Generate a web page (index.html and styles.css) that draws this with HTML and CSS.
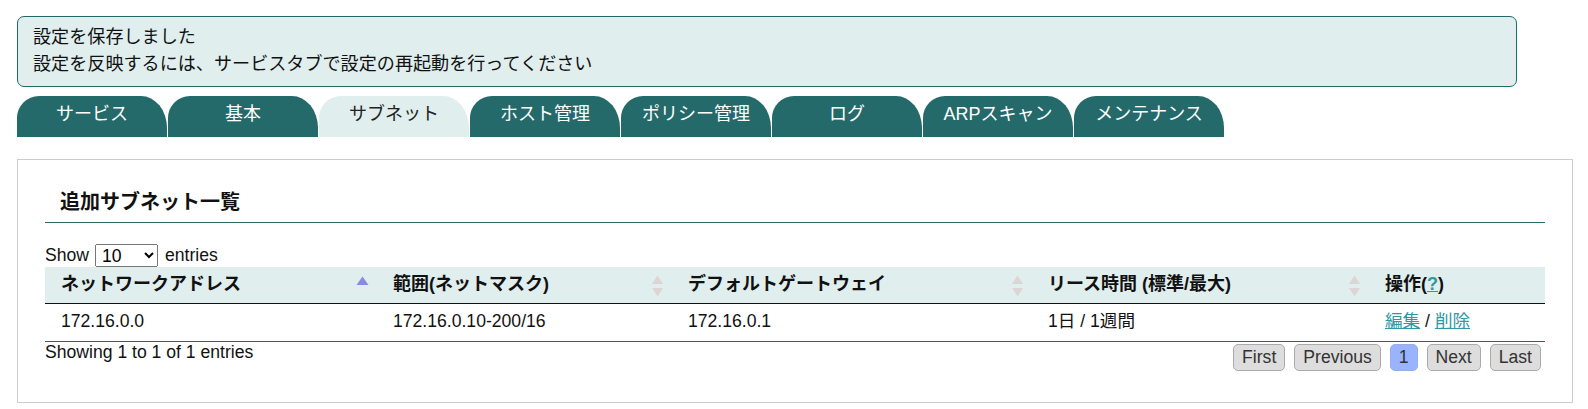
FILE: index.html
```html
<!DOCTYPE html>
<html lang="ja">
<head>
<meta charset="utf-8">
<title>サブネット</title>
<link rel="stylesheet" href="styles.css">
</head>
<body>
<div class="msg">
  <div>設定を保存しました</div>
  <div>設定を反映するには、サービスタブで設定の再起動を行ってください</div>
</div>
<nav class="tabs">
  <a class="tab">サービス</a>
  <a class="tab">基本</a>
  <a class="tab active">サブネット</a>
  <a class="tab">ホスト管理</a>
  <a class="tab">ポリシー管理</a>
  <a class="tab">ログ</a>
  <a class="tab">ARPスキャン</a>
  <a class="tab">メンテナンス</a>
</nav>
<section class="panel">
  <h3 class="title">追加サブネット一覧</h3>
  <div class="length">
    <span>Show</span>
    <select class="len-select"><option>10</option><option>25</option><option>50</option><option>100</option></select>
    <span>entries</span>
  </div>
  <table class="grid">
    <colgroup>
      <col class="c1"><col class="c2"><col class="c3"><col class="c4"><col class="c5">
    </colgroup>
    <thead>
      <tr>
        <th><div class="th-in"><span>ネットワークアドレス</span>
          <svg class="sort" width="13" height="22" viewBox="0 0 13 22"><path class="asc" d="M6.5 1.5L12.5 10H0.5Z"/></svg></div></th>
        <th><div class="th-in"><span>範囲(ネットマスク)</span>
          <svg class="sort" width="13" height="22" viewBox="0 0 13 22"><path class="off" d="M6.5 0.5L12 9H1Z"/><path class="off" d="M1 13H12L6.5 21.5Z"/></svg></div></th>
        <th><div class="th-in"><span>デフォルトゲートウェイ</span>
          <svg class="sort" width="13" height="22" viewBox="0 0 13 22"><path class="off" d="M6.5 0.5L12 9H1Z"/><path class="off" d="M1 13H12L6.5 21.5Z"/></svg></div></th>
        <th><div class="th-in"><span>リース時間 (標準/最大)</span>
          <svg class="sort" width="13" height="22" viewBox="0 0 13 22"><path class="off" d="M6.5 0.5L12 9H1Z"/><path class="off" d="M1 13H12L6.5 21.5Z"/></svg></div></th>
        <th><div class="th-in"><span>操作(<a class="link" href="#">?</a>)</span></div></th>
      </tr>
    </thead>
    <tbody>
      <tr>
        <td>172.16.0.0</td>
        <td>172.16.0.10-200/16</td>
        <td>172.16.0.1</td>
        <td>1日 / 1週間</td>
        <td><a class="link" href="#">編集</a> / <a class="link" href="#">削除</a></td>
      </tr>
    </tbody>
  </table>
  <div class="foot">
    <div class="info">Showing 1 to 1 of 1 entries</div>
    <div class="pager">
      <a class="pbtn">First</a>
      <a class="pbtn">Previous</a>
      <a class="pbtn current">1</a>
      <a class="pbtn">Next</a>
      <a class="pbtn">Last</a>
    </div>
  </div>
</section>
</body>
</html>
```

FILE: styles.css
```css
html, body {
  background: #fff;
}
body {
  margin: 0;
  padding: 16px 15px 0 17px;
  font-family: "Liberation Sans", "Noto Sans CJK JP", sans-serif;
  font-size: 17.6px;
  color: #111;
}
.msg {
  width: 1500px;
  box-sizing: border-box;
  border: 1px solid #236a6a;
  border-radius: 7px;
  background: #e0eeee;
  padding: 7px 15px 8px;
  line-height: 27px;
  font-size: 18.1px;
}
.tabs {
  display: flex;
  gap: 1px;
  margin-top: 9px;
}
.tab {
  width: 150px;
  height: 41px;
  box-sizing: border-box;
  padding-top: 5px;
  line-height: 27px;
  text-align: center;
  font-size: 18px;
  color: #fff;
  background: #256a6a;
  border-radius: 22px 26px 0 0 / 22px 32px 0 0;
}
.tab.active {
  background: #e0eeee;
  color: #222;
}
.panel {
  margin-top: 22px;
  border: 1px solid #cccccc;
  padding: 27px 27px 31px;
}
.title {
  margin: 0;
  padding: 0 15px 5px;
  line-height: 30px;
  font-size: 20px;
  font-weight: bold;
  border-bottom: 1px solid #2b6a6a;
}
.length {
  margin-top: 21px;
  height: 23px;
  display: flex;
  align-items: center;
  gap: 6px;
  line-height: 23px;
}
.len-select {
  width: 63px;
  height: 23px;
  font-family: "Liberation Sans", sans-serif;
  font-size: 17.6px;
  padding: 0 2px;
  margin: 0 1px 0 0;
}
.grid {
  width: 100%;
  border-collapse: collapse;
  table-layout: fixed;
}
.c1 { width: 332px; }
.c2 { width: 295px; }
.c3 { width: 360px; }
.c4 { width: 337px; }
.c5 { width: 176px; }
.grid th {
  height: 36px;
  padding: 0 8px 0 16px;
  background: #e0eeee;
  border-bottom: 1px solid #111;
  text-align: left;
  font-weight: bold;
  font-size: 18px;
}
.th-in {
  display: flex;
  align-items: center;
  justify-content: space-between;
}
.th-in span {
  position: relative;
  top: -3px;
}
.sort {
  flex: none;
  display: block;
  margin-top: 2px;
}
.sort .asc { fill: #8a8ae4; }
.sort .off { fill: #ddd4d4; }
.grid td {
  height: 34px;
  padding: 0 8px 3px 16px;
  line-height: 20px;
  border-bottom: 1px solid #2e6262;
}
.link {
  color: #2e98a3;
  text-decoration: underline;
}
.foot {
  display: flex;
  justify-content: space-between;
  align-items: flex-start;
}
.info {
  line-height: 21px;
}
.pager {
  display: flex;
  gap: 9px;
  margin-top: 2px;
  padding-right: 4px;
}
.pbtn {
  display: block;
  height: 27px;
  box-sizing: border-box;
  padding: 0 8px;
  line-height: 25px;
  border: 1px solid #aaaaaa;
  border-radius: 5px;
  background: #dddddd;
  color: #333;
}
.pbtn.current {
  background: #99b3ff;
  border-color: #99aee8;
}
```
